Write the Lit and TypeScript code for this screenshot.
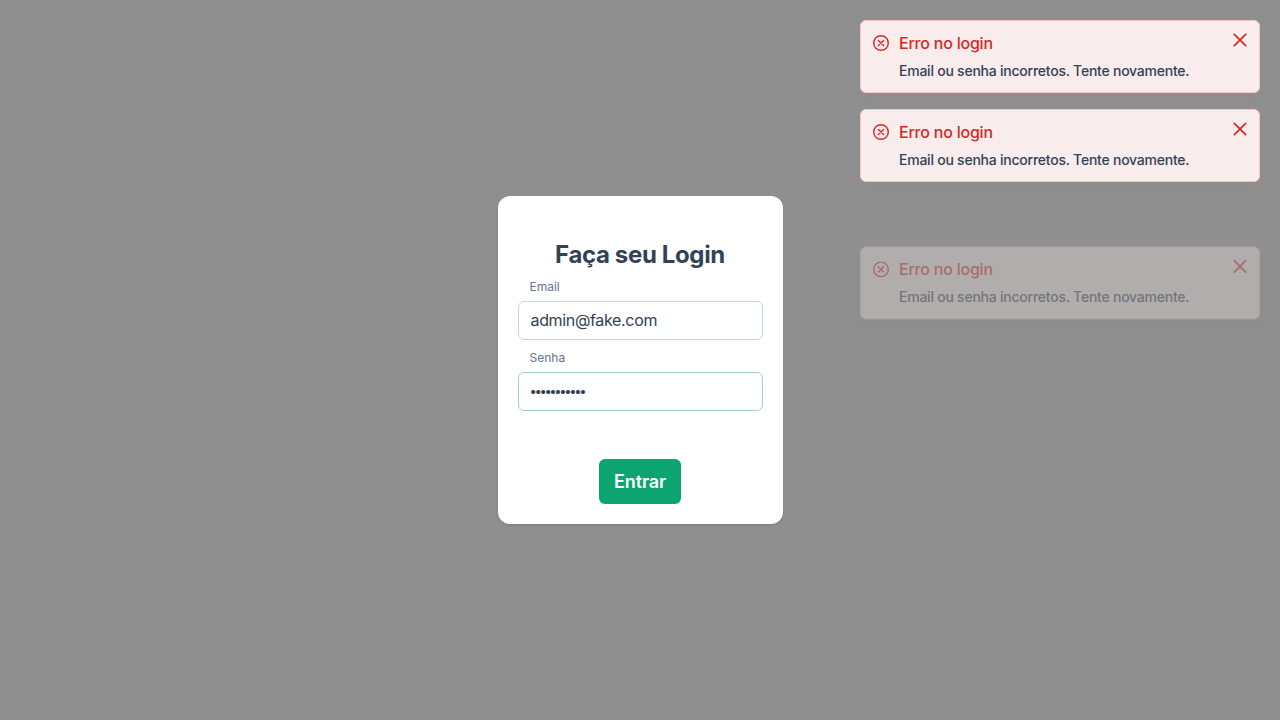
import { LitElement, html, css } from "lit";
import { customElement, property } from "lit/decorators.js";
import { classMap } from "lit/directives/class-map.js";

@customElement("toast-message")
class ToastMessage extends LitElement {
  @property({ type: String }) summary = "";
  @property({ type: String }) detail = "";
  @property({ type: Boolean }) entering = false;

  static styles = css`
    :host { display: block; }
    .toast {
      box-sizing: border-box;
      width: 400px;
      height: 73px;
      display: flex;
      align-items: flex-start;
      gap: 10px;
      padding: 11px 12px;
      border: 1px solid #fbc4c4;
      border-radius: 6px;
      background: #f8ecec;
      box-shadow: 0 4px 8px 0 rgba(239, 68, 68, 0.04);
    }
    .entering { opacity: 0.33; transform: translateY(48.4px); }
    .icon { flex: none; width: 16px; height: 16px; margin-top: 3px; color: #dc2626; }
    .text { flex: 1; display: flex; flex-direction: column; gap: 7px; white-space: nowrap; }
    .summary { font-size: 16px; line-height: 22px; font-weight: 500; color: #dc2626; letter-spacing: -0.22px; }
    .detail { font-size: 14px; line-height: 20px; font-weight: 500; color: #334155; letter-spacing: -0.235px; }
    .close {
      flex: none; display: flex; width: 14px; height: 14px; padding: 0;
      margin-top: 1px; border: 0; background: none; color: #dc2626;
    }
    svg { display: block; fill: none; stroke: currentColor; stroke-linecap: round; }
  `;

  render() {
    return html`
      <div class=${classMap({ toast: true, entering: this.entering })}>
        <svg class="icon" viewBox="0 0 16 16" stroke-width="1.4">
          <circle cx="8" cy="8" r="7.3"></circle>
          <path d="M5.4 5.4 10.6 10.6M10.6 5.4 5.4 10.6"></path>
        </svg>
        <div class="text">
          <div class="summary">${this.summary}</div>
          <div class="detail">${this.detail}</div>
        </div>
        <button class="close" aria-label="Fechar">
          <svg width="14" height="14" viewBox="0 0 14 14" stroke-width="1.7">
            <path d="M1.3 1.3 12.7 12.7M12.7 1.3 1.3 12.7"></path>
          </svg>
        </button>
      </div>
    `;
  }
}

@customElement("app-root")
class AppRoot extends LitElement {
  static styles = css`
    :host {
      display: grid;
      place-items: center;
      box-sizing: border-box;
      width: 100%;
      height: 720px;
      overflow: hidden;
      background: #8f8f8f;
      font-family: Inter, sans-serif;
    }
    .card {
      box-sizing: border-box;
      width: 285px;
      height: 328px;
      margin-left: 1px;
      padding: 20px;
      display: flex;
      flex-direction: column;
      border-radius: 12px;
      background: #fff;
      color: #334155;
      box-shadow: 0 1px 3px rgba(0, 0, 0, 0.1), 0 1px 2px -1px rgba(0, 0, 0, 0.1);
    }
    h1 {
      margin: 23px 1px 9px 0;
      font-size: 24px; line-height: 32px; font-weight: 700;
      text-align: center; letter-spacing: -0.36px; white-space: nowrap;
    }
    label { padding-left: 11.5px; margin-bottom: 7px; font-size: 12px; line-height: 14px; color: #64748b; }
    input {
      box-sizing: border-box; width: 245px; height: 39px; padding: 0 11.5px 1px;
      border: 1px solid #cbd5e1; border-radius: 6px; outline: none;
      background: #fff; color: #334155; font: 400 16px Inter, sans-serif;
      letter-spacing: -0.34px; margin-bottom: 11px;
    }
    .active { border-color: #a3d0cb; }
    .password { padding-left: 10.5px; font-size: 13px; letter-spacing: -2.35px; }
    .submit {
      align-self: center; width: 82px; height: 45px; margin: 37px 1px 0 0; padding: 0;
      border: 0; border-radius: 6px; background: #0ca572; color: #fff;
      font: 600 18px Inter, sans-serif; letter-spacing: -0.15px;
    }
    .toasts {
      position: absolute; top: 20px; right: 20px;
      display: flex; flex-direction: column; gap: 16px;
    }
  `;

  render() {
    return html`
      <form class="card" @submit=${(e: Event) => e.preventDefault()}>
        <h1>Faça seu Login</h1>
        <label for="email">Email</label>
        <input id="email" type="text" .value=${"admin@fake.com"} />
        <label for="password">Senha</label>
        <input id="password" class="password active" type="password" .value=${"senha123456"} />
        <button class="submit">Entrar</button>
      </form>
      <div class="toasts">
        ${[false, false, true].map((entering) => html`
          <toast-message
            summary="Erro no login"
            detail="Email ou senha incorretos. Tente novamente."
            ?entering=${entering}
          ></toast-message>
        `)}
      </div>
    `;
  }
}
